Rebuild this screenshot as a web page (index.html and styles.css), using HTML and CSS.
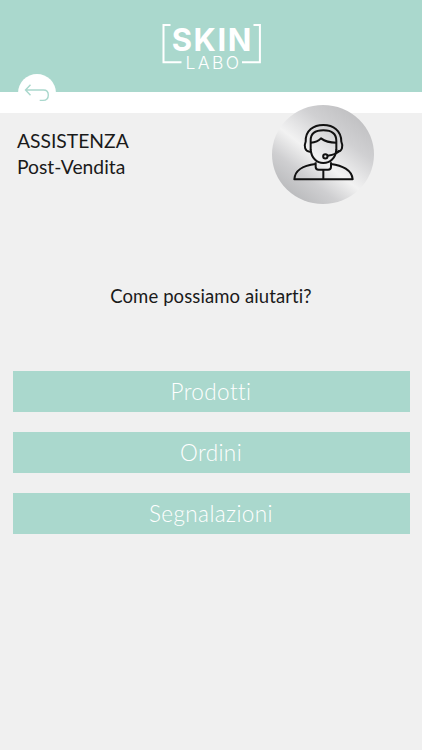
FILE: index.html
```html
<!DOCTYPE html>
<html lang="it">
<head>
    <meta charset="UTF-8">
    <meta name="viewport" content="width=device-width, initial-scale=1.0">
    <title>Assistenza Post-Vendita</title>
    <link rel="stylesheet" href="styles.css">
</head>
<body>
    <header class="header">
        <svg class="logo" viewBox="0 0 100 50" role="img" aria-label="Skin Labo">
            <path class="logo-frame" d="M9.500 5H2.500V42.300H20.500M92.500 5H98.900V42.300H81" />
            <text class="logo-skin" x="10.800" y="30.500" textLength="79.500">SKIN</text>
            <text class="logo-labo" x="24.500" y="49.300" textLength="53.500">LABO</text>
        </svg>
    </header>
    <div class="bar">
        <a class="back" href="#" aria-label="Indietro">
            <svg viewBox="0 0 24 18">
                <path d="M5.500 0.800L0.500 6L5.500 11.200M0.500 6H18.500C21.800 6 23.300 8.500 23.300 11C23.300 14 21.500 16.400 18 16.400H14.700" />
            </svg>
        </a>
    </div>

    <main>
        <section class="intro">
            <h1 class="title">
                <span class="title-main">ASSISTENZA</span>
                <span class="title-sub">Post-Vendita</span>
            </h1>
            <div class="avatar">
                <svg viewBox="30 30 306 297">
                    <path d="M146 170C127 172 126 151 131 140C130 106 155 90 184 90C214 90 238 107 238 140C243 151 243 171 223 170" />
                    <path d="M146 165V136C146 113 162 106 184 106C208 106 223 114 223 138V165" />
                    <path d="M146 143C160 142 170 138 177 130C190 140 205 143 223 143" />
                    <path d="M146 163C148 190 165 204 184 204C204 204 221 190 223 163" />
                    <circle cx="190" cy="184" r="6.500" />
                    <path d="M197 182C214 180 227 176 232 166" />
                    <path d="M161 202V216Q161 224 170 224H198Q207 224 207 216V202" />
                    <path d="M161 207C122 212 99 224 97 253H272C270 225 240 211 207 207M184 224V253" />
                </svg>
            </div>
        </section>

        <p class="question">Come possiamo aiutarti?</p>

        <nav class="menu">
            <a class="btn prodotti" href="#">Prodotti</a>
            <a class="btn ordini" href="#">Ordini</a>
            <a class="btn segnalazioni" href="#">Segnalazioni</a>
        </nav>
    </main>
</body>
</html>
```

FILE: styles.css
```css
* {
    box-sizing: border-box;
}

body {
    margin: 0;
    min-height: 100vh;
    background: #f0f0f0;
    color: #1a1a1a;
    font-family: Lato, "Open Sans", sans-serif;
    font-variant-ligatures: none;
}

.header {
    height: 92px;
    padding-top: 20px;
    background: #aad8cd;
    text-align: center;
}

.logo {
    width: 100px;
    height: 50px;
    overflow: visible;
    font-family: Inter, sans-serif;
}

.logo-frame {
    fill: none;
    stroke: #fff;
    stroke-width: 2;
}

.logo-skin {
    fill: #fff;
    font-size: 31px;
    font-weight: 700;
}

.logo-labo {
    fill: #fff;
    font-size: 17.5px;
    font-weight: 300;
}

.bar {
    height: 21px;
    padding-left: 18px;
    background: #fff;
}

.back {
    display: flex;
    align-items: center;
    justify-content: center;
    width: 38px;
    height: 38px;
    margin-top: -18px;
    border-radius: 50%;
    background: #fff;
    float: left;
}

.back svg {
    width: 24px;
    height: 18px;
    overflow: visible;
    fill: none;
    stroke: #aad8cd;
    stroke-width: 1.4;
}

.intro {
    display: flex;
    justify-content: space-between;
    height: 91px;
    padding: 0 48px 0 17px;
}

.title {
    margin: 15px 0 0;
    font-size: 19.3px;
    font-weight: 400;
    line-height: 26px;
}

.title span {
    display: block;
}

.avatar {
    width: 102px;
    height: 99px;
    margin-top: -8px;
    border-radius: 50%;
    background: linear-gradient(38deg, #b6b7b9 10%, #cfcfd1 30%, #f2f2f2 46%, #e6e6e7 54%, #d0d0d2 68%, #bebec0 90%);
}

.avatar svg {
    display: block;
    width: 102px;
    height: 99px;
    fill: none;
    stroke: #111;
    stroke-width: 6;
    stroke-linejoin: round;
}

.question {
    margin: 79px 0 0;
    font-size: 18.5px;
    line-height: 26px;
    letter-spacing: 0.1px;
    text-align: center;
}

.menu {
    display: flex;
    flex-direction: column;
    gap: 20px;
    margin-top: 62px;
    padding: 0 12.5px;
}

.btn {
    height: 41px;
    background: #aad8cd;
    color: #fff;
    font-size: 22.5px;
    font-weight: 300;
    letter-spacing: 0.4px;
    line-height: 41px;
    text-align: center;
    text-decoration: none;
}
```
